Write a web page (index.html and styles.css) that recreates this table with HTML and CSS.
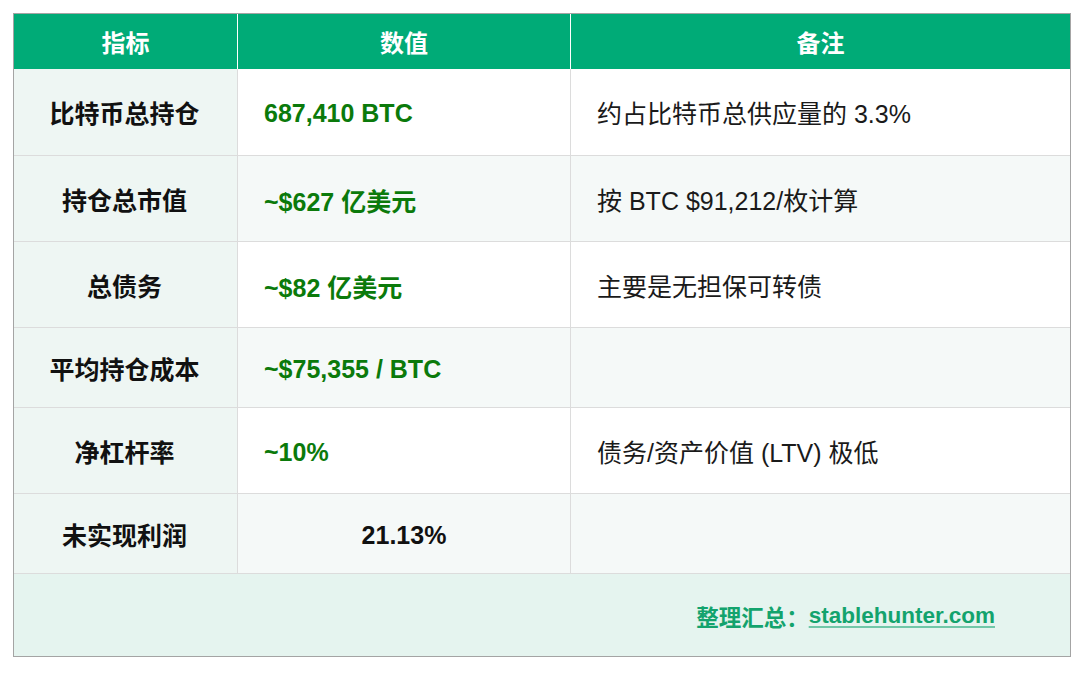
FILE: index.html
```html
<!DOCTYPE html>
<html lang="zh-CN">
<head>
<meta charset="utf-8">
<title>持仓指标</title>
<link rel="stylesheet" href="styles.css">
</head>
<body>
<div class="sheet">
  <div class="cell head">指标</div>
  <div class="cell head">数值</div>
  <div class="cell head last">备注</div>

  <div class="cell label">比特币总持仓</div>
  <div class="cell value">687,410 BTC</div>
  <div class="cell note last">约占比特币总供应量的 3.3%</div>

  <div class="cell label">持仓总市值</div>
  <div class="cell value alt">~$627 亿美元</div>
  <div class="cell note alt last">按 BTC $91,212/枚计算</div>

  <div class="cell label">总债务</div>
  <div class="cell value">~$82 亿美元</div>
  <div class="cell note last">主要是无担保可转债</div>

  <div class="cell label">平均持仓成本</div>
  <div class="cell value alt">~$75,355 / BTC</div>
  <div class="cell note alt last"></div>

  <div class="cell label">净杠杆率</div>
  <div class="cell value">~10%</div>
  <div class="cell note last">债务/资产价值 (LTV) 极低</div>

  <div class="cell label">未实现利润</div>
  <div class="cell value alt plain">21.13%</div>
  <div class="cell note alt last"></div>

  <div class="footer">整理汇总：<a class="link" href="#">stablehunter.com</a></div>
</div>
</body>
</html>
```

FILE: styles.css
```css
html, body {
  margin: 0;
  padding: 0;
  background: #ffffff;
}

body {
  padding: 13px 0 0 13px;
  font-family: "Liberation Sans", "Noto Sans CJK SC", sans-serif;
}

.sheet {
  width: 1056px;
  border: 1px solid #a4a4a4;
  display: grid;
  grid-template-columns: 224px 333px 499px;
  grid-template-rows: 55px 87px 86px 86px 80px 86px 80px 82px;
  background: #ffffff;
}

.cell {
  display: flex;
  align-items: center;
  font-size: 25px;
  box-sizing: border-box;
  border-right: 1px solid #dcdcdc;
  border-bottom: 1px solid #dcdcdc;
}

.cell.last {
  border-right: none;
}

.head {
  background: #00ab77;
  color: #ffffff;
  font-weight: bold;
  font-size: 24px;
  justify-content: center;
  border-right: 1px solid #ffffff;
  border-bottom: none;
}

.head.last {
  border-right: none;
}

.label {
  background: #eef6f3;
  color: #111111;
  font-weight: bold;
  justify-content: center;
  padding-right: 2px;
}

.value {
  color: #0b7a0b;
  font-weight: bold;
  padding-left: 26px;
  padding-top: 3px;
}

.value.plain {
  color: #111111;
  justify-content: center;
  padding-left: 0;
}

.note {
  color: #1a1a1a;
  padding-left: 26px;
}

.alt {
  background: #f5f9f8;
}

.footer {
  grid-column: 1 / 4;
  background: #e5f4ef;
  display: flex;
  align-items: center;
  justify-content: flex-end;
  padding-right: 75px;
  padding-top: 2px;
  font-size: 22.5px;
  font-weight: bold;
  color: #13a36d;
}

.link {
  color: #13a36d;
  text-decoration: underline;
  text-decoration-color: rgba(19, 163, 109, 0.55);
  text-decoration-thickness: 2px;
  text-underline-offset: 3px;
}
```
